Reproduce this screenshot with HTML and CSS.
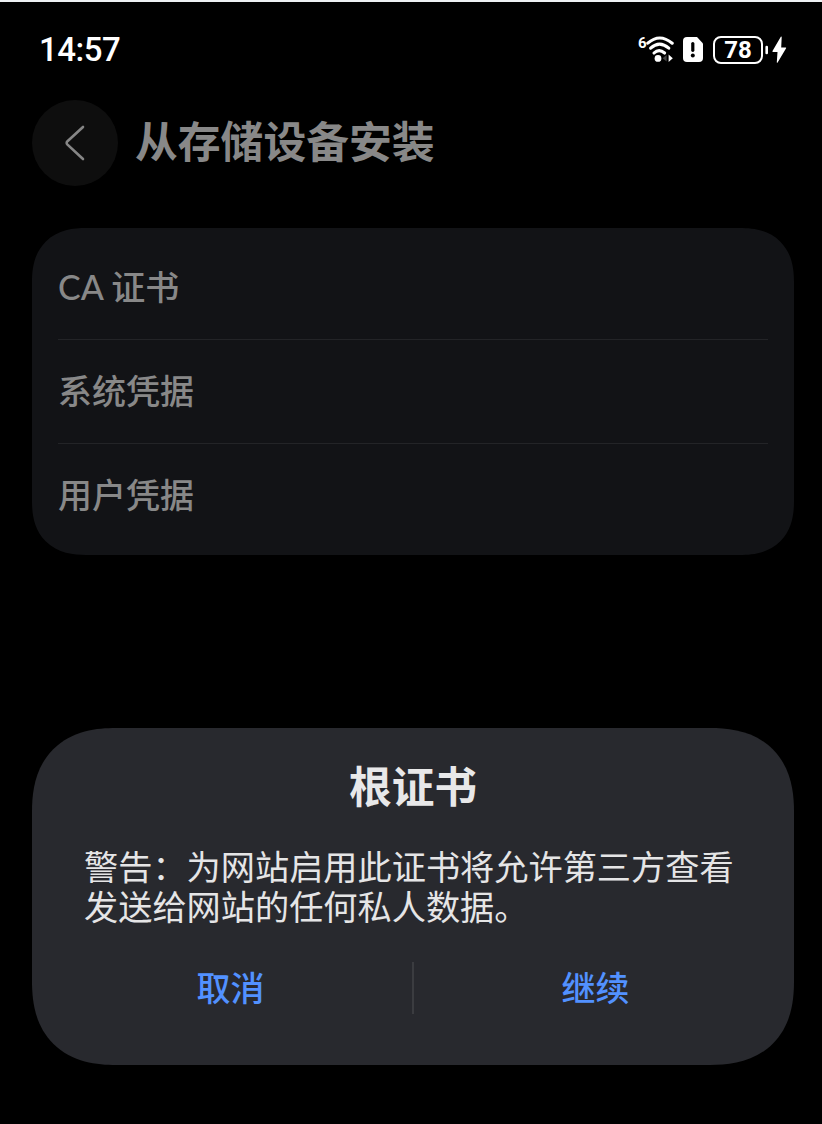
FILE: index.html
```html
<!DOCTYPE html>
<html lang="zh-CN">
<head>
<meta charset="utf-8">
<title>从存储设备安装</title>
<link rel="stylesheet" href="styles.css">
</head>
<body>
<div class="screen">
  <header class="status">
    <span class="time">14:57</span>
    <div class="indicators">
      <svg class="wifi" width="38" height="32" viewBox="0 0 38 32">
        <text class="wifi-gen" x="0" y="13.5">6</text>
        <g fill="none" stroke="#fff" stroke-width="3.1" stroke-linecap="round">
          <path d="M9.8 9.2Q21.5-1.2 34.2 9.2"/>
          <path d="M12.6 14.2Q21.5 6 30.8 14.2"/>
          <path d="M16 19Q21 14.2 26.6 19"/>
        </g>
        <circle cx="20" cy="24.4" r="3.4" fill="#fff"/>
        <path d="M28.6 21v6.5l-4-3.2z" fill="#444"/>
        <path d="M30.6 20.5v7.5l4.2-3.7z" fill="#fff"/>
      </svg>
      <svg class="sim" width="20" height="26" viewBox="0 0 20 26">
        <path d="M4 0h10l6 6.5V21q0 4-4 4H4q-4 0-4-4V4q0-4 4-4z" fill="#fff"/>
        <path d="M9.8 6.5v6.8" stroke="#000" stroke-width="3.2" stroke-linecap="round"/>
        <circle cx="9.8" cy="18.5" r="2" fill="#000"/>
      </svg>
      <span class="battery">78</span>
      <svg class="charge" width="22" height="28" viewBox="0 0 22 28">
        <path d="M1.7 11v6" stroke="#fff" stroke-width="2.6" stroke-linecap="round"/>
        <path d="M15.8.8 7.5 15q-.4.9.5.9h4.5l-.7 10.3q.2 1.2 1 .1l8.3-14q.4-.9-.5-.9h-4.4l.5-10.4q-.2-1-.9-.2z" fill="#fff"/>
      </svg>
    </div>
  </header>
  <div class="heading">
    <div class="back">
      <svg width="24" height="38" viewBox="0 0 24 38"><path d="M20 3 4.5 17.2q-1.7 1.7 0 3.4L20 35" fill="none" stroke="#868686" stroke-width="2.6" stroke-linecap="round"/></svg>
    </div>
    <h1 class="title">从存储设备安装</h1>
  </div>
  <main class="list">
    <div class="item">CA 证书</div>
    <div class="item">系统凭据</div>
    <div class="item">用户凭据</div>
  </main>
  <section class="dialog">
    <h2 class="dialog-title">根证书</h2>
    <p class="message">警告：为网站启用此证书将允许第三方查看发送给网站的任何私人数据。</p>
    <div class="actions">
      <div class="action">取消</div>
      <div class="divider"></div>
      <div class="action">继续</div>
    </div>
  </section>
</div>
</body>
</html>
```

FILE: styles.css
```css
* { box-sizing: border-box; }
body { margin: 0; background: #000; font-family: Lato, "Noto Sans CJK SC", sans-serif; }
.screen {
  width: 822px; height: 1124px; overflow: hidden;
  background: #000; border-top: 2px solid #eef1f3;
  padding: 0 28px 0 32px;
}
.status { display: flex; justify-content: space-between; height: 98px; padding: 28px 0 0 7px; }
.time { font: 500 33px/40px Roboto, sans-serif; letter-spacing: -0.5px; color: #fff; }
.indicators { display: flex; align-items: flex-start; padding-right: 7px; }
.wifi { margin-top: 4px; margin-right: 6px; }
.wifi-gen { font: 700 15px Roboto, sans-serif; fill: #fff; }
.sim { margin: 7px 10px 0 1px; }
.battery {
  width: 50px; height: 28px; margin-top: 6px;
  border: 2px solid #fff; border-radius: 8px;
  font: 700 24px/25px Roboto, sans-serif; color: #fff; text-align: center;
}
.charge { margin: 6px 0 0 2px; }
.heading { display: flex; align-items: center; height: 86px; gap: 17px; }
.back { display: flex; align-items: center; justify-content: center; width: 86px; height: 86px; border-radius: 50%; background: #0e0e0e; }
.title { margin: 0; padding-bottom: 2px; font-size: 42.8px; font-weight: 700; line-height: 60px; color: #888; }
.list {
  display: flex; flex-direction: column; width: 762px; height: 327px; margin-top: 42px;
  padding: 8px 26px 0; border-radius: 43px; background: #121316;
}
.item { flex: none; height: 104px; font-size: 34px; font-weight: 500; line-height: 101px; color: #888; border-bottom: 1px solid #232427; }
.item:last-child { border-bottom: 0; }
.dialog {
  display: flex; flex-direction: column; width: 762px; height: 337px; margin-top: 173px;
  padding: 29px 51px 0; border-radius: 68px; background: #28292e;
}
.dialog-title { margin: 0; font-size: 42.7px; font-weight: 700; line-height: 60px; text-align: center; color: #e8e8e9; }
.message { margin: 30px 0 0 1px; font-size: 34.2px; line-height: 40px; color: #e5e5e6; }
.actions { display: flex; align-items: center; height: 52px; margin: 35px -34px 0; }
.divider { width: 2px; height: 52px; background: #3b3c40; }
.action { flex: 1; font-size: 34px; font-weight: 500; line-height: 50px; text-align: center; color: #5291ff; }

/* Continuous-curvature corners */
@supports (corner-shape: superellipse(1.25)) {
  .list { border-radius: 54px; corner-shape: superellipse(1.25); }
  .dialog { border-radius: 84px; corner-shape: superellipse(1.25); }
}
```
